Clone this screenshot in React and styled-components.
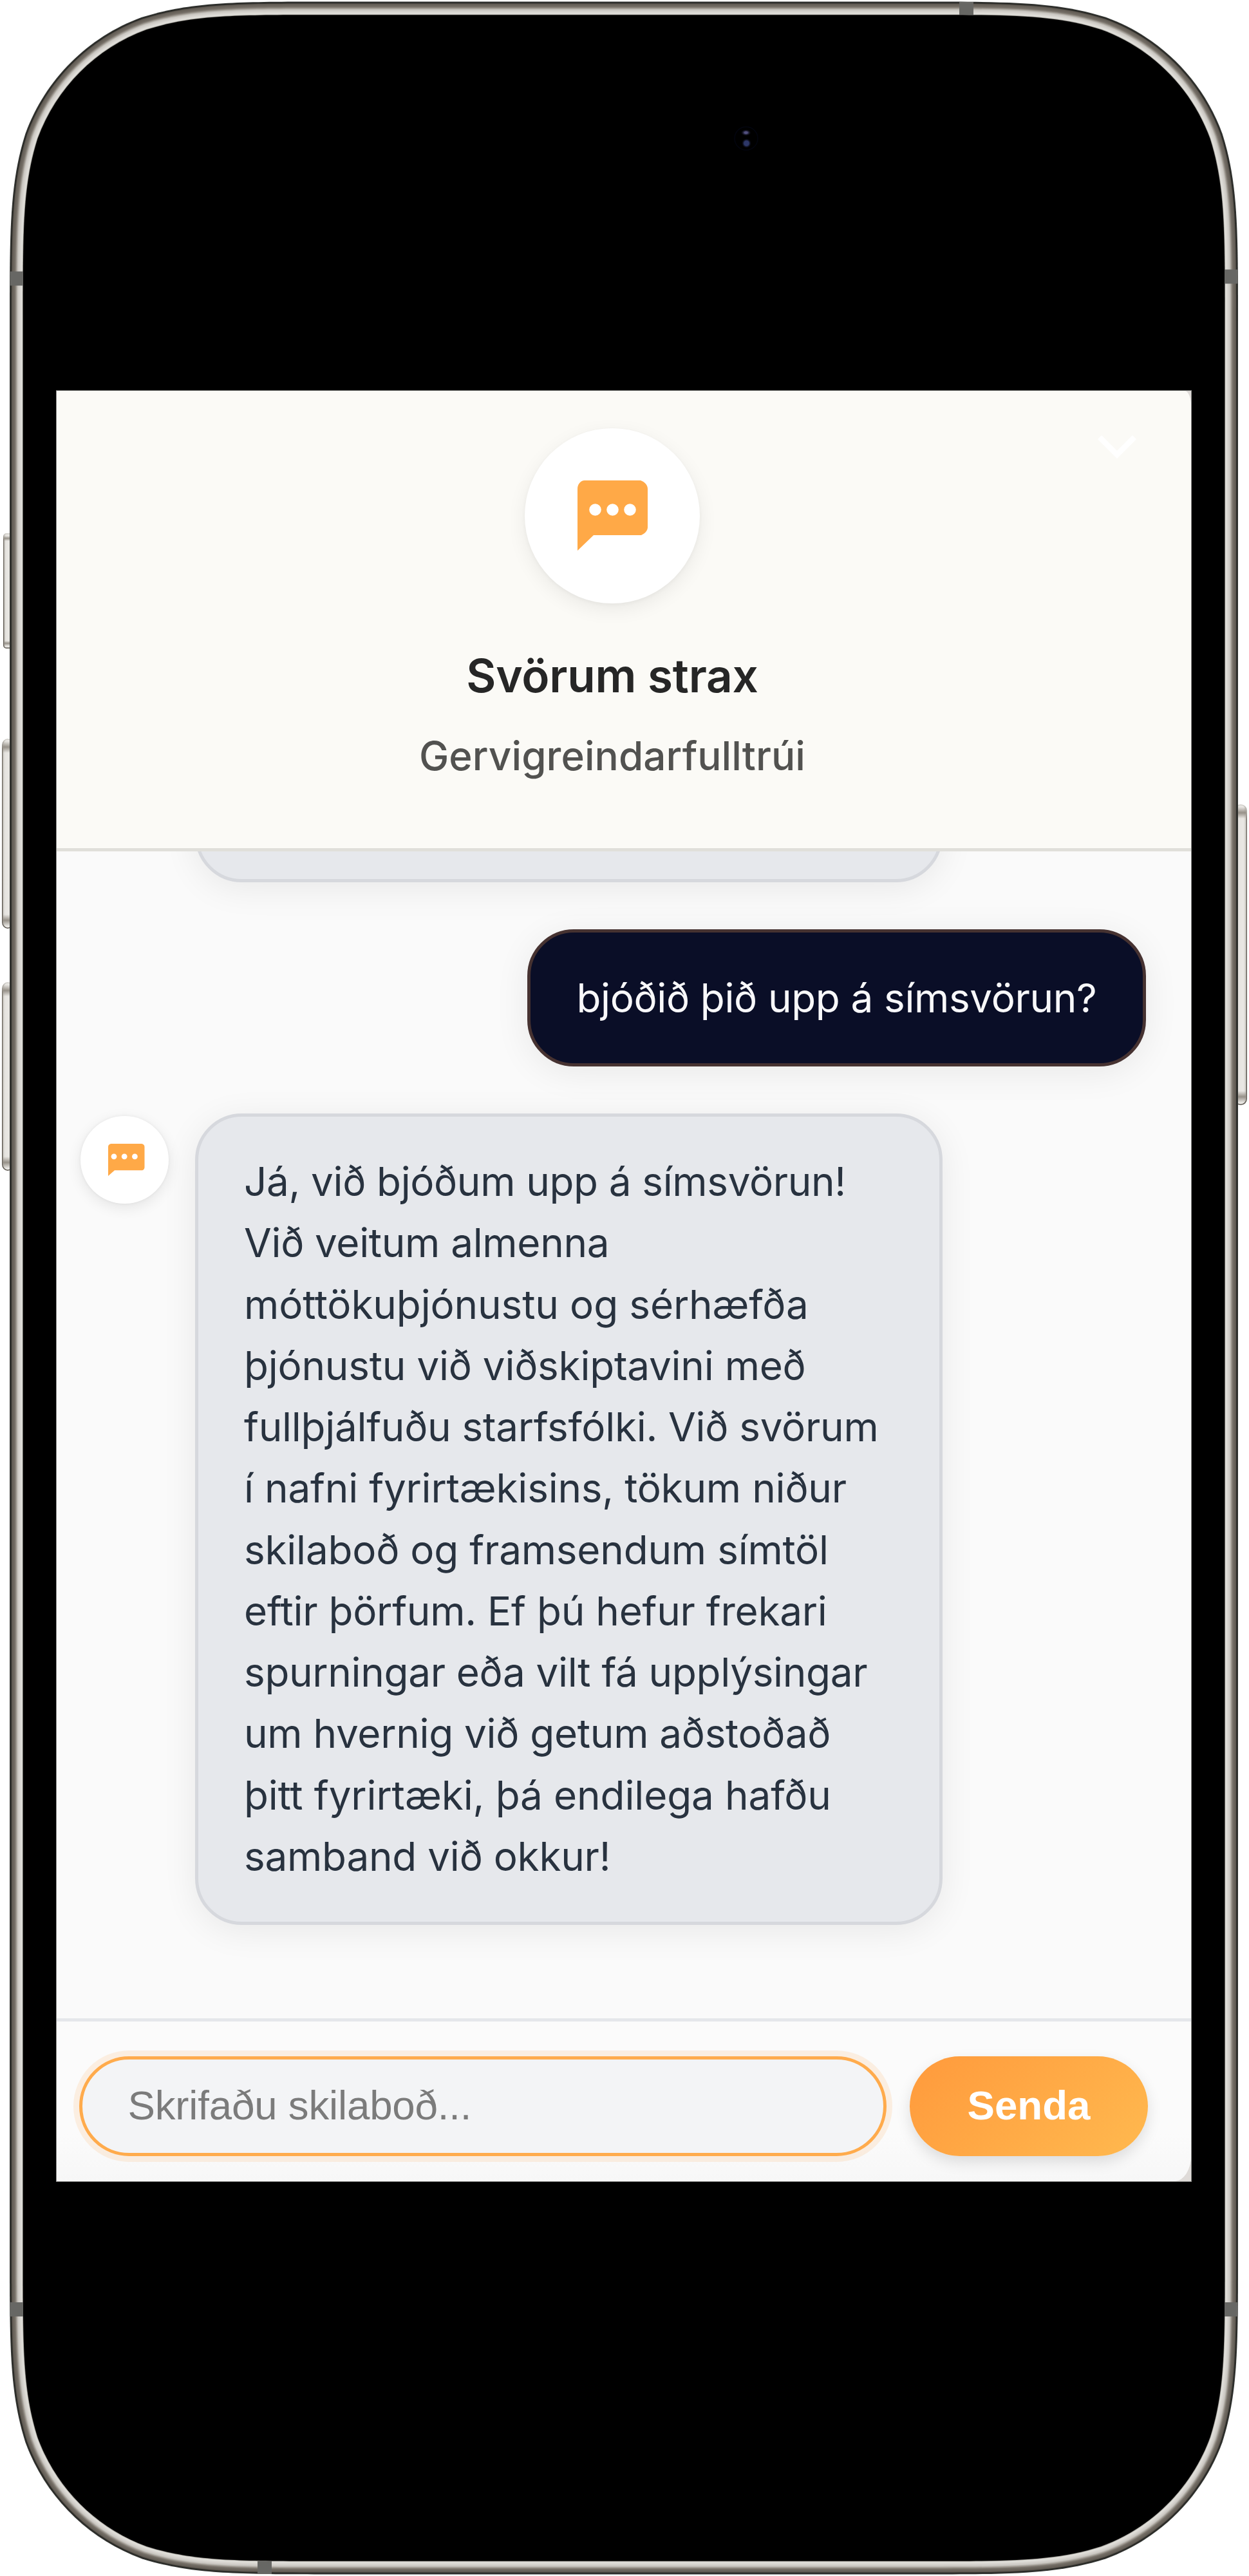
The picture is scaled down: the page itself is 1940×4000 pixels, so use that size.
import React from "react";
import styled, { createGlobalStyle } from "styled-components";

const GlobalStyle = createGlobalStyle`
  *, *::before, *::after { box-sizing: border-box; }
  body { margin: 0; background: #ffffff; }
`;

const ui = `Inter, "Liberation Sans", sans-serif`;
const system = `"Liberation Sans", Arial, sans-serif`;

const Device = styled.main`
  position: relative;
  width: 1940px;
  height: 4000px;
  padding: 606px 89px 612px 87px;
  overflow: hidden;
`;

const Chassis = styled.svg`
  position: absolute;
  inset: 0;
  display: block;
`;

const Screen = styled.section`
  position: relative;
  width: 100%;
  height: 100%;
  border: 1px solid #8c8c8a;
  background: #dfdbd8;
`;

const Widget = styled.div`
  display: flex;
  flex-direction: column;
  height: 100%;
  overflow: hidden;
  background: #fafafa;
  border-radius: 0 10px 26px 0 / 0 24px 40px 0;
`;

const Header = styled.header`
  position: relative;
  flex: none;
  display: flex;
  flex-direction: column;
  align-items: center;
  height: 715px;
  padding: 57.5px 36px 0 0;
  background: #fbfaf6;
  border-bottom: 5px solid #e0dfda;
`;

const Collapse = styled.button`
  position: absolute;
  top: 65px;
  right: 83px;
  display: grid;
  place-items: center;
  width: 64px;
  height: 40px;
  padding: 0;
  border: 0;
  background: none;
`;

const Badge = styled.div`
  flex: none;
  display: grid;
  place-items: center;
  width: ${(p) => p.$size}px;
  height: ${(p) => p.$size}px;
  border-radius: 50%;
  background: #ffffff;
  box-shadow: ${(p) =>
    p.$size > 200
      ? "0 9px 30px rgba(0, 0, 0, 0.07), 0 2px 6px rgba(0, 0, 0, 0.04)"
      : "0 6px 22px rgba(0, 0, 0, 0.09), 0 0 5px rgba(0, 0, 0, 0.06)"};
`;

const Title = styled.h1`
  margin: 68px 0 0;
  font: 600 71px/88px ${ui};
  letter-spacing: -0.2px;
  color: #262626;
  white-space: nowrap;
`;

const Subtitle = styled.p`
  margin: 41px 0 0;
  font: 500 62px/80px ${ui};
  letter-spacing: 0.05px;
  color: #525250;
  white-space: nowrap;
`;

const Messages = styled.div`
  flex: 1;
  min-height: 0;
  display: flex;
  flex-direction: column;
  justify-content: flex-end;
  gap: 72.7px;
  padding: 0 70px 145px 37px;
  overflow: hidden;
`;

const Row = styled.div`
  flex: none;
  display: flex;
  align-items: flex-start;
  gap: 41px;
  justify-content: ${(p) => (p.$own ? "flex-end" : "flex-start")};
`;

const AvatarSlot = styled.div`
  flex: none;
  width: 136.5px;
  padding-top: 4px;
`;

const Bubble = styled.div`
  width: ${(p) => (p.$own ? 961 : 1161)}px;
  min-height: 212.7px;
  padding: 53.5px 0 53.5px 71.5px;
  border: 5px solid ${(p) => (p.$own ? "#463231" : "#d6d8dd")};
  border-radius: 72.5px;
  background: ${(p) => (p.$own ? "#0a0e27" : "#e6e8ec")};
  color: ${(p) => (p.$own ? "#f8f8fa" : "#28323f")};
  box-shadow: 0 9px 54px rgba(0, 0, 0, 0.075);
  font: 400 62px/95.25px ${ui};
`;

const Line = styled.span`
  display: block;
  white-space: pre;
  letter-spacing: ${(p) => p.$tracking}px;
`;

const Composer = styled.form`
  flex: none;
  display: flex;
  align-items: flex-start;
  gap: 36px;
  height: 253.5px;
  padding: 54px 67px 0 34.5px;
  border-top: 5px solid #e5e7eb;
  background: linear-gradient(#fbfbfb 70%, #f7f7f7);
`;

const Field = styled.input`
  flex: 1;
  min-width: 0;
  height: 155px;
  padding: 0 71px 3px;
  border: 5px solid #ffab4c;
  border-radius: 78px;
  outline: none;
  background: #f3f4f6;
  box-shadow: 0 0 0 9px rgba(255, 160, 70, 0.14);
  font: 400 63.6px ${system};
  letter-spacing: -0.18px;
  color: #28323f;
  &::placeholder { color: #7b7b7b; opacity: 1; }
`;

const Send = styled.button`
  flex: none;
  width: 370px;
  height: 155px;
  padding: 0 0 3px;
  border: 0;
  border-radius: 78px;
  background: linear-gradient(135deg, #ff9a3c, #ffb94f);
  box-shadow: 0 9px 22px rgba(0, 0, 0, 0.12);
  font: 700 63.6px ${system};
  color: #ffffff;
`;

// Continuous-curvature rounded rectangle, inset from the outer hull.
function hull(inset) {
  const l = 15 + inset;
  const t = 2.5 + inset;
  const r = 1923 - inset;
  const b = 3997.5 - inset;
  const k = 325 - inset;
  const e = 1.528665 * k, c = 1.088493 * k, d = 0.868407 * k;
  const m = 0.631494 * k, n = 0.074911 * k, o = 0.372824 * k, q = 0.16906 * k;
  return [
    `M${l + e} ${t}L${r - e} ${t}`,
    `C${r - c} ${t} ${r - d} ${t} ${r - m} ${t + n}`,
    `C${r - o} ${t + q} ${r - q} ${t + o} ${r - n} ${t + m}`,
    `C${r} ${t + d} ${r} ${t + c} ${r} ${t + e}L${r} ${b - e}`,
    `C${r} ${b - c} ${r} ${b - d} ${r - n} ${b - m}`,
    `C${r - q} ${b - o} ${r - o} ${b - q} ${r - m} ${b - n}`,
    `C${r - d} ${b} ${r - c} ${b} ${r - e} ${b}L${l + e} ${b}`,
    `C${l + c} ${b} ${l + d} ${b} ${l + m} ${b - n}`,
    `C${l + o} ${b - q} ${l + q} ${b - o} ${l + n} ${b - m}`,
    `C${l} ${b - d} ${l} ${b - c} ${l} ${b - e}L${l} ${t + e}`,
    `C${l} ${t + c} ${l} ${t + d} ${l + n} ${t + m}`,
    `C${l + q} ${t + o} ${l + o} ${t + q} ${l + m} ${t + n}`,
    `C${l + d} ${t} ${l + c} ${t} ${l + e} ${t}Z`,
  ].join("");
}

const rim = [
  [0, "#3b3d3a"], [1, "#262724"], [2, "#33322e"], [3, "#5a554e"], [4, "#676159"],
  [6, "#706a62"], [8, "#7d776f"], [9, "#8c867e"], [10, "#9f9a92"], [11, "#b3afa8"],
  [12, "#c4c1bb"], [13, "#cfccc7"], [15, "#d8d5d0"], [17, "#deddd8"], [19, "#d9d7d1"],
  [20, "#8d8b86"], [20.7, "#000000"],
];

const bands = [
  [1490, 3, 22, 20], [400, 3977, 22, 20],
  [15.5, 421.5, 20.5, 22], [1902, 418.5, 20.5, 22],
  [15.5, 3575, 20.5, 22], [1902, 3575, 20.5, 22],
];

const keys = [
  { x: 5, y: 828, w: 16, h: 179, r: 4 },
  { x: 3, y: 1147, w: 18, h: 295, r: 9 },
  { x: 3, y: 1525, w: 18, h: 293, r: 9 },
  { x: 1917, y: 1249, w: 20, h: 467, r: 9 },
];

function Phone() {
  return (
    <Chassis width="1940" height="4000" viewBox="0 0 1940 4000" aria-hidden="true">
      <defs>
        <linearGradient id="key" x1="0" x2="1" y1="0" y2="0">
          <stop offset="0" stopColor="#c9c6c0" />
          <stop offset="0.25" stopColor="#e6e4e0" />
          <stop offset="0.75" stopColor="#e9e7e3" />
          <stop offset="1" stopColor="#c9c6c0" />
        </linearGradient>
        <linearGradient id="keyEnd" x1="0" x2="0" y1="0" y2="1">
          <stop offset="0" stopColor="#8d877e" stopOpacity="0" />
          <stop offset="0.5" stopColor="#8d877e" stopOpacity="0.9" />
          <stop offset="1" stopColor="#8d877e" stopOpacity="0" />
        </linearGradient>
        <linearGradient id="keyEdge" x1="0" x2="0" y1="0" y2="1">
          <stop offset="0" stopColor="#d2d0cb" />
          <stop offset="0.05" stopColor="#77726a" />
          <stop offset="1" stopColor="#5f5a53" />
        </linearGradient>
        <radialGradient id="lens">
          <stop offset="0.5" stopColor="#2d3768" />
          <stop offset="1" stopColor="#0a0c1c" stopOpacity="0" />
        </radialGradient>
        <radialGradient id="glint">
          <stop offset="0.3" stopColor="#535180" />
          <stop offset="1" stopColor="#0a0c1c" stopOpacity="0" />
        </radialGradient>
      </defs>
      {keys.map((k) => (
        <g key={k.y}>
          <rect x={k.x + 0.75} y={k.y + 0.75} width={k.w - 1.5} height={k.h - 1.5} rx={k.r}
            fill="url(#key)" stroke="url(#keyEdge)" strokeWidth="1.5" />
          <rect x={k.x + 1.5} y={k.y + 4} width={k.w - 3} height={k.r * 2} fill="url(#keyEnd)" />
          <rect x={k.x + 1.5} y={k.y + k.h - 4 - k.r * 2} width={k.w - 3} height={k.r * 2} fill="url(#keyEnd)" />
        </g>
      ))}
      {rim.map(([inset, color]) => (
        <path key={inset} d={hull(inset)} fill={color} />
      ))}
      {bands.map(([x, y, w, h]) => (
        <rect key={`${x}-${y}`} x={x} y={y} width={w} height={h} fill="#676764" />
      ))}
      <circle cx="1159" cy="215" r="18" fill="none" stroke="#03050f" strokeWidth="1.5" />
      <ellipse cx="1158.7" cy="206" rx="8" ry="5" fill="url(#glint)" />
      <circle cx="1159.5" cy="222.5" r="7.5" fill="url(#lens)" />
    </Chassis>
  );
}

function ChatMark() {
  return (
    <svg width="109" height="109" viewBox="0 0 109 109" aria-hidden="true">
      <path fill="#ffa947"
        d="M11 0H98C104 2 109 7 109 13V73C109 78 104 83 99 85H25L0 109V13C0 6 5 0 11 0Z" />
      <circle cx="27.5" cy="45.5" r="9.3" fill="#fff" />
      <circle cx="54.5" cy="45.5" r="9.3" fill="#fff" />
      <circle cx="81.5" cy="45.5" r="9.3" fill="#fff" />
    </svg>
  );
}

function AvatarMark() {
  return (
    <svg width="68" height="50" viewBox="-9 0 68 50" aria-hidden="true">
      <path fill="#ffa947"
        d="M4.5 0H52Q56.5 1 56.5 5V37Q56 40.5 53 41.3H10L0 50V5Q0 1 4.5 0Z" />
      <circle cx="9" cy="19.8" r="4.4" fill="#fff" />
      <circle cx="25.2" cy="19.8" r="4.4" fill="#fff" />
      <circle cx="41.4" cy="19.8" r="4.4" fill="#fff" />
    </svg>
  );
}

const reply = [
  ["Já, við bjóðum upp á símsvörun!", -0.36],
  ["Við veitum almenna", -0.33],
  ["móttökuþjónustu og sérhæfða", -0.14],
  ["þjónustu við viðskiptavini með", -0.24],
  ["fullþjálfuðu starfsfólki. Við svörum", -0.29],
  ["í nafni fyrirtækisins, tökum niður", -0.22],
  ["skilaboð og framsendum símtöl", -0.22],
  ["eftir þörfum. Ef þú hefur frekari", -0.26],
  ["spurningar eða vilt fá upplýsingar", -0.34],
  ["um hvernig við getum aðstoðað", -0.3],
  ["þitt fyrirtæki, þá endilega hafðu", -0.13],
  ["samband við okkur!", -0.25],
];

export default function App() {
  return (
    <>
      <GlobalStyle />
      <Device>
        <Phone />
        <Screen>
          <Widget>
            <Header>
              <Badge $size={272}><ChatMark /></Badge>
              <Title>Svörum strax</Title>
              <Subtitle>Gervigreindarfulltrúi</Subtitle>
              <Collapse type="button">
                <svg width="64" height="40" viewBox="0 0 64 40" aria-hidden="true">
                  <path d="M5 7L32 34L59 7" fill="none" stroke="#fff" strokeWidth="8.5" />
                </svg>
              </Collapse>
            </Header>
            <Messages>
              <Row>
                <AvatarSlot />
                <Bubble />
              </Row>
              <Row $own>
                <Bubble $own><Line $tracking={-0.36}>bjóðið þið upp á símsvörun?</Line></Bubble>
              </Row>
              <Row>
                <AvatarSlot><Badge $size={136.5}><AvatarMark /></Badge></AvatarSlot>
                <Bubble>
                  {reply.map(([text, tracking]) => (
                    <Line key={text} $tracking={tracking}>{text}</Line>
                  ))}
                </Bubble>
              </Row>
            </Messages>
            <Composer>
              <Field placeholder="Skrifaðu skilaboð..." />
              <Send type="button">Senda</Send>
            </Composer>
          </Widget>
        </Screen>
      </Device>
    </>
  );
}
